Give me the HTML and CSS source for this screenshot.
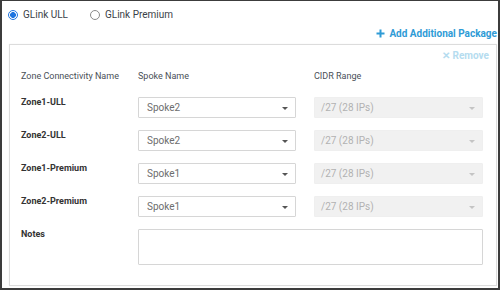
FILE: index.html
```html
<!DOCTYPE html>
<html lang="en">

<head>
  <meta charset="UTF-8">
  <meta name="viewport" content="width=device-width, initial-scale=1.0">
  <title>GLink Packages</title>
  <link rel="stylesheet" href="styles.css">
</head>

<body>
  <div class="frame">
    <div class="package-type">
      <label class="radio"><span class="radio-dot checked"></span>GLink ULL</label>
      <label class="radio"><span class="radio-dot"></span>GLink Premium</label>
    </div>

    <div class="add-row">
      <a href="#" class="add-link">
        <svg width="9" height="9" viewBox="0 0 9 9"><path d="M4.5 0.5v8M0.5 4.5h8" stroke="#2f9bd6" stroke-width="2"/></svg>
        Add Additional Package
      </a>
    </div>

    <section class="panel">
      <div class="remove-row">
        <a href="#" class="remove-link">&#x2715; Remove</a>
      </div>

      <div class="zone-grid head">
        <div>Zone Connectivity Name</div>
        <div>Spoke Name</div>
        <div>CIDR Range</div>
      </div>

      <div class="zone-grid rows">
        <div class="zone-label">Zone1-ULL</div>
        <div class="select">Spoke2<span class="caret"></span></div>
        <div class="select disabled">/27 (28 IPs)<span class="caret"></span></div>

        <div class="zone-label">Zone2-ULL</div>
        <div class="select">Spoke2<span class="caret"></span></div>
        <div class="select disabled">/27 (28 IPs)<span class="caret"></span></div>

        <div class="zone-label">Zone1-Premium</div>
        <div class="select">Spoke1<span class="caret"></span></div>
        <div class="select disabled">/27 (28 IPs)<span class="caret"></span></div>

        <div class="zone-label">Zone2-Premium</div>
        <div class="select">Spoke1<span class="caret"></span></div>
        <div class="select disabled">/27 (28 IPs)<span class="caret"></span></div>

        <div class="zone-label">Notes</div>
        <div class="notes"></div>
      </div>
    </section>
  </div>
</body>

</html>
```

FILE: styles.css
```css
* {
  box-sizing: border-box;
}

body {
  margin: 0;
  font-family: Roboto, "Liberation Sans", sans-serif;
  color: #333;
}

.frame {
  width: 500px;
  height: 290px;
  border: 2px solid #3c3c3c;
  border-top-width: 1px;
  background: #fff;
  padding-top: 7px;
}

.package-type {
  display: flex;
  height: 13px;
  align-items: center;
  padding-left: 6px;
  gap: 22px;
  font-size: 10px;
  color: #3a3f48;
}

.radio {
  display: flex;
  align-items: center;
  gap: 5px;
}

.radio-dot {
  width: 10px;
  height: 10px;
  border-radius: 50%;
  border: 1px solid #8a8a8a;
  background: #fff;
}

.radio-dot.checked {
  border-color: #1f75e0;
  background: radial-gradient(circle, #1f75e0 0 2.6px, #fff 3.2px);
}

.add-row {
  margin-top: 6px;
  height: 12px;
  display: flex;
  justify-content: flex-end;
  padding-right: 1px;
}

.add-link {
  display: flex;
  align-items: center;
  gap: 4px;
  font-size: 10px;
  font-weight: bold;
  color: #2f9bd6;
  text-decoration: none;
}

.panel {
  margin: 5px 1px 0 7px;
  border: 1px solid #dcdcdc;
  box-shadow: 0 0 1px rgba(0, 0, 0, 0.08);
  padding: 5px 12px 20px 11px;
}

.remove-row {
  height: 12px;
  display: flex;
  justify-content: flex-end;
  margin-right: -5px;
}

.remove-link {
  font-size: 10px;
  font-weight: bold;
  color: #b5dcef;
  text-decoration: none;
}

.zone-grid {
  display: grid;
  grid-template-columns: 99px 158px 169px;
  column-gap: 18px;
}

.head {
  margin-top: 8px;
  height: 12px;
  line-height: 12px;
  font-size: 9px;
  color: #4a4f57;
}

.rows {
  margin-top: 15px;
  row-gap: 12px;
}

.zone-label {
  font-size: 9px;
  font-weight: bold;
  line-height: 11px;
  color: #333;
  white-space: nowrap;
}

.select {
  position: relative;
  height: 21px;
  border: 1px solid #d6d6d6;
  border-radius: 1px;
  padding-left: 8px;
  font-size: 10px;
  line-height: 19px;
  color: #6d6d6d;
}

.select.disabled {
  border-color: #efefef;
  background: #f1f1f1;
  padding-left: 6px;
  color: #b2b2b2;
}

.caret {
  position: absolute;
  right: 7px;
  top: 9px;
  border-left: 3px solid transparent;
  border-right: 3px solid transparent;
  border-top: 3px solid #555;
}

.disabled .caret {
  border-top-color: #c4c4c4;
}

.notes {
  grid-column: 2 / 4;
  height: 36px;
  border: 1px solid #d6d6d6;
  border-radius: 1px;
}
```
